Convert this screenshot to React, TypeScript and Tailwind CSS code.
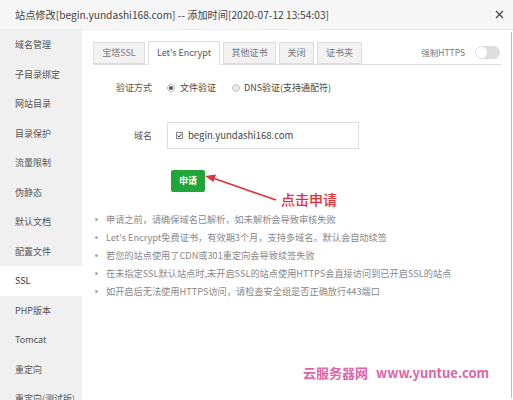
import React from 'react';

// Sidebar menu entries of the site settings dialog
const MENU_ITEMS = [
  '域名管理',
  '子目录绑定',
  '网站目录',
  '目录保护',
  '流量限制',
  '伪静态',
  '默认文档',
  '配置文件',
  'SSL',
  'PHP版本',
  'Tomcat',
  '重定向',
  '重定向(测试版)',
];

const TABS = [
  { label: '宝塔SSL', width: 'w-[52px]' },
  { label: "Let's Encrypt", width: 'w-[72px]', active: true },
  { label: '其他证书', width: 'w-[53px]' },
  { label: '关闭', width: 'w-[35px]' },
  { label: '证书夹', width: 'w-[45px]' },
];

const TIPS = [
  '申请之前，请确保域名已解析，如未解析会导致审核失败',
  "Let's Encrypt免费证书，有效期3个月，支持多域名。默认会自动续签",
  '若您的站点使用了CDN或301重定向会导致续签失败',
  '在未指定SSL默认站点时,未开启SSL的站点使用HTTPS会直接访问到已开启SSL的站点',
  '如开启后无法使用HTTPS访问，请检查安全组是否正确放行443端口',
];

const FONT = "font-['Noto_Sans_CJK_SC','Noto_Sans',sans-serif]";

const Sidebar: React.FC = () => (
  <div className="w-[82px] shrink-0 bg-[#f0f0f0]">
    {MENU_ITEMS.map(item => (
      <div
        key={item}
        className={
          item === 'SSL'
            ? 'h-[29.5px] flex items-center pl-[15px] text-[9px] text-[#333] bg-white whitespace-nowrap'
            : 'h-[29.5px] flex items-center pl-[15px] text-[9px] text-[#555] whitespace-nowrap'
        }
      >
        {item}
      </div>
    ))}
  </div>
);

const TabBar: React.FC = () => (
  <div className="flex items-end h-[24px] border-b border-[#ddd]">
    <div className="flex items-end gap-[3px]">
      {TABS.map(tab =>
        tab.active ? (
          <div
            key={tab.label}
            className={`${tab.width} h-[24px] -mb-px flex items-center justify-center bg-white border border-[#ddd] border-b-white text-[9px] text-[#555]`}
          >
            {tab.label}
          </div>
        ) : (
          <div
            key={tab.label}
            className={`${tab.width} h-[22px] flex items-center justify-center bg-[#f2f2f2] border border-[#ddd] text-[9px] text-[#777]`}
          >
            {tab.label}
          </div>
        )
      )}
    </div>
    <div className="ml-auto flex items-center self-center gap-[10px] pr-[1px]">
      <span className="text-[8.5px] text-[#777]">强制HTTPS</span>
      <span className="w-[25px] h-[13px] rounded-full bg-[#ddd] flex items-center px-[1px]">
        <span className="w-[11px] h-[11px] rounded-full bg-white" />
      </span>
    </div>
  </div>
);

const Radio: React.FC<{ checked?: boolean }> = ({ checked }) => (
  <span
    className={
      checked
        ? 'shrink-0 w-[8px] h-[8px] rounded-full border border-[#bbb] bg-white flex items-center justify-center'
        : 'shrink-0 w-[8px] h-[8px] rounded-full border border-[#ccc] bg-[#e8e8e8] flex'
    }
  >
    {checked && <span className="w-[4px] h-[4px] rounded-full bg-[#555]" />}
  </span>
);

const Annotation: React.FC = () => (
  <>
    <svg className="absolute left-[204px] top-[172px]" width="80" height="32" viewBox="0 0 80 32">
      <line x1="6" y1="5" x2="72" y2="28" stroke="#d9363e" strokeWidth="1.6" />
      <polygon points="1,4 12,2.5 9.5,10" fill="#d9363e" />
    </svg>
    <div className="absolute left-[281px] top-[189px] text-[14px] leading-[20px] text-[#e0313b] font-medium">
      点击申请
    </div>
  </>
);

export default function App() {
  return (
    <div className={`relative w-[513px] h-[400px] overflow-hidden bg-white ${FONT}`}>
      {/* Title bar */}
      <div className="h-[30px] flex items-center pl-[15px] pr-[9px] bg-[#f7f7f7] border-b border-[#eee]">
        <span className="text-[10.2px] text-[#444] whitespace-nowrap">
          站点修改[begin.yundashi168.com] -- 添加时间[2020-07-12 13:54:03]
        </span>
        <svg className="ml-auto" width="9" height="9" viewBox="0 0 9 9">
          <path d="M1 1 L8 8 M8 1 L1 8" stroke="#444" strokeWidth="1.2" />
        </svg>
      </div>

      <div className="flex h-[370px]">
        <Sidebar />

        <div className="flex-1 border-r border-[#bbb] my-[2px] mr-[1px]">
          <div className="pl-[11px] pr-[10px] pt-[9px]">
            <TabBar />

            {/* Verification method */}
            <div className="flex items-center h-[20px] mt-[13px]">
              <div className="w-[59px] text-right text-[9px] text-[#555]">验证方式</div>
              <div className="ml-[15px] flex items-center text-[9px] text-[#444]">
                <Radio checked />
                <span className="ml-[5px]">文件验证</span>
                <span className="ml-[16px] flex">
                  <Radio />
                </span>
                <span className="ml-[4px]">DNS验证(支持通配符)</span>
              </div>
            </div>

            {/* Domain list */}
            <div className="flex items-center mt-[24px]">
              <div className="w-[59px] text-right text-[9px] text-[#555]">域名</div>
              <div className="ml-[15px] w-[192px] h-[27px] border border-[#ddd] flex items-center pl-[8px]">
                <span className="w-[7px] h-[7px] border border-[#888] bg-white flex items-center justify-center">
                  <svg width="5" height="5" viewBox="0 0 5 5">
                    <path d="M0.5 2.5 L2 4 L4.5 0.8" stroke="#333" strokeWidth="1" fill="none" />
                  </svg>
                </span>
                <span className="ml-[5px] text-[9.5px] text-[#444]">begin.yundashi168.com</span>
              </div>
            </div>

            {/* Apply button */}
            <div className="mt-[16px] pl-[78px]">
              <button className="w-[34px] h-[22px] rounded-[2px] bg-[#20a53a] text-white text-[9px] font-bold">
                申请
              </button>
            </div>

            {/* Tips */}
            <ul className="mt-[19px] pl-[2px]">
              {TIPS.map(tip => (
                <li key={tip} className="flex items-center h-[18px] text-[9.2px] text-[#888] whitespace-nowrap">
                  <span className="w-[3px] h-[3px] rounded-full bg-[#aaa] mr-[8px]" />
                  {tip}
                </li>
              ))}
            </ul>
          </div>
        </div>
      </div>

      <Annotation />

      {/* Watermark */}
      <div className="absolute left-[303px] top-[363px] flex items-center gap-[8px] text-[#dd65a8] font-bold whitespace-nowrap">
        <span className="text-[13px]">云服务器网</span>
        <span className="text-[13px]">www.yuntue.com</span>
      </div>
    </div>
  );
}
